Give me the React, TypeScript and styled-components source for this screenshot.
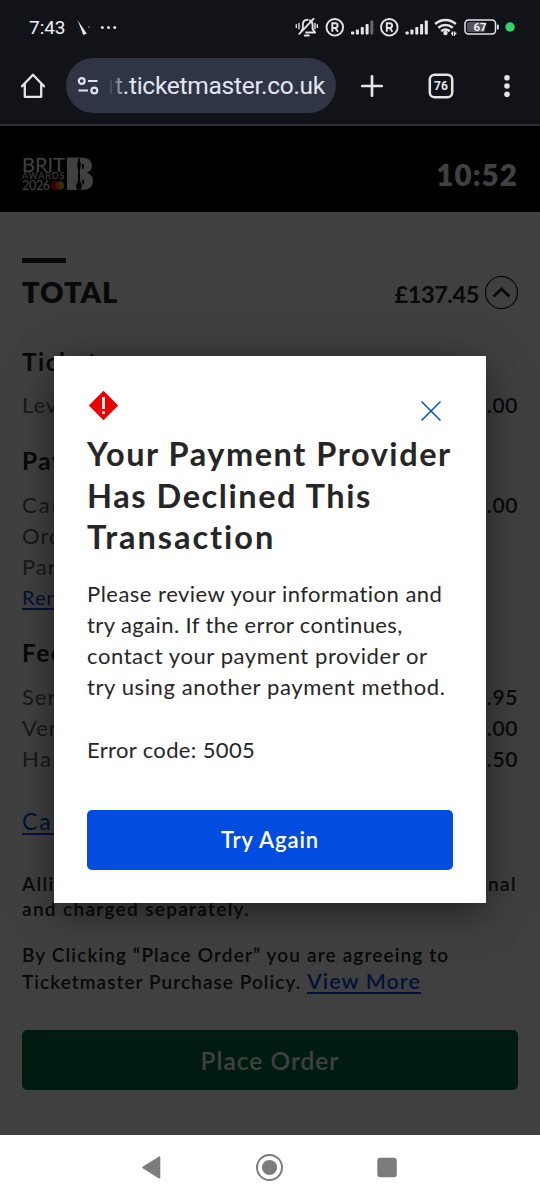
import React from "react";
import styled, { createGlobalStyle } from "styled-components";

const Global = createGlobalStyle`
  * { box-sizing: border-box; }
  body { margin: 0; background: #fff; }
  p, h1, h2 { margin: 0; font-weight: inherit; }
  button { border: 0; padding: 0; background: none; font: inherit; color: inherit; }
`;

const Screen = styled.div`
  width: 540px;
  height: 1200px;
  display: flex;
  flex-direction: column;
  overflow: hidden;
  font-family: Lato, "Liberation Sans", sans-serif;
`;

const BrowserChrome = styled.header`
  height: 126px;
  background: #121318;
  border-bottom: 2px solid #2b2c31;
  color: #e4e5ec;
  font-family: Roboto, sans-serif;
`;

const StatusBar = styled.div`
  height: 54px;
  display: flex;
  align-items: center;
  justify-content: space-between;
  padding: 0 24px 0 29px;
`;

const Clock = styled.span`
  font-size: 19px;
  font-weight: 400;
  letter-spacing: -0.05px;
  line-height: 24px;
  width: 48px;
  color: #f0f0f5;
`;

const StatusLeft = styled.div`
  display: flex;
  align-items: center;
  padding-top: 1px;
`;

const Toolbar = styled.div`
  height: 63px;
  display: flex;
  align-items: center;
  padding-left: 20px;
`;

const AddressPill = styled.div`
  margin-left: 20px;
  width: 270px;
  height: 55px;
  border-radius: 28px;
  background: #2f3545;
  display: flex;
  align-items: center;
  padding-left: 11px;
`;

const Address = styled.span`
  margin-left: 11px;
  font-size: 24.5px;
  line-height: 34px;
  letter-spacing: -0.27px;
  white-space: nowrap;
  color: #e2e5f2;
`;

const UrlEdge = styled.span`
  display: inline-block;
  width: 2px;
  height: 14px;
  margin-right: 3px;
  background: #474c5c;
`;

const FadedLetter = styled.span`
  background: linear-gradient(90deg, #666b7a, #b4b8c6);
  background-clip: text;
  color: transparent;
`;

const ToolIcon = styled.svg<{ $gap: number }>`
  margin-left: ${(p) => p.$gap}px;
  flex: none;
`;

const Page = styled.main`
  position: relative;
  height: 1009px;
  background: #fff;
  color: #262626;
`;

const EventHeader = styled.div`
  height: 86px;
  padding: 12px 22px 0 22px;
  background: #000;
  display: flex;
  justify-content: space-between;
  align-items: center;
`;

const Timer = styled.span`
  color: #fff;
  font-size: 29.5px;
  font-weight: 800;
  line-height: 36px;
  letter-spacing: 1.1px;
`;

const Logo = styled.div`
  display: flex;
  height: 34px;
  margin-top: -3px;
`;

const LogoWords = styled.div`
  width: 45px;
  color: #fff;
  display: flex;
  flex-direction: column;
  white-space: nowrap;
`;

const LogoLine = styled.span<{ $size: number; $height: number; $track: number }>`
  font-size: ${(p) => p.$size}px;
  line-height: ${(p) => p.$height}px;
  height: ${(p) => p.$height}px;
  letter-spacing: ${(p) => p.$track}px;
  display: flex;
  align-items: center;
`;

const Summary = styled.section`
  padding: 46px 22px 0;
`;

const Accent = styled.div`
  width: 44px;
  height: 5px;
  background: #262626;
`;

const TotalRow = styled.div`
  margin-top: 12px;
  height: 34px;
  display: flex;
  align-items: center;
  font-weight: 700;
`;

const TotalLabel = styled.h2`
  flex: 1;
  font-size: 29px;
  font-weight: 800;
  line-height: 32px;
  letter-spacing: 0.9px;
  padding-bottom: 1px;
`;

const TotalValue = styled.span`
  font-size: 23.5px;
  font-weight: 700;
  letter-spacing: -0.4px;
  margin: 3px 6px 0 0;
`;

const SectionTitle = styled.h2<{ $top: number }>`
  margin-top: ${(p) => p.$top}px;
  height: 30px;
  line-height: 30px;
  font-size: 24.5px;
  font-weight: 700;
  letter-spacing: 1.5px;
`;

const Lines = styled.div<{ $top: number }>`
  margin-top: ${(p) => p.$top}px;
`;

const Row = styled.div`
  height: 31px;
  line-height: 29px;
  display: flex;
  justify-content: space-between;
  font-size: 22px;
  letter-spacing: 1px;
  color: #646464;
`;

const Amount = styled.span`
  color: #262626;
  font-weight: 600;
  font-size: 21px;
  letter-spacing: 0.6px;
`;

const TextLink = styled.span<{ $size?: number; $weight?: number }>`
  color: #024ddf;
  text-decoration: underline;
  text-underline-offset: 3px;
  text-decoration-thickness: 1.5px;
  font-size: ${(p) => p.$size ?? 20}px;
  font-weight: ${(p) => p.$weight ?? 400};
`;

const FinePrint = styled.p<{ $top: number; $line: number }>`
  margin-top: ${(p) => p.$top}px;
  font-size: 19px;
  font-weight: 600;
  line-height: ${(p) => p.$line}px;
  white-space: nowrap;
`;

const Track = styled.span<{ $by: number }>`
  display: block;
  letter-spacing: ${(p) => p.$by}px;
`;

const Split = styled.span`
  display: flex;
  justify-content: space-between;
  padding-right: 1px;
  letter-spacing: 1.4px;
`;

const PlaceOrder = styled.button`
  display: block;
  width: 496px;
  height: 60px;
  margin-top: 35px;
  border-radius: 5px;
  background: #006b3d;
  color: #fff;
  font-size: 24.5px;
  font-weight: 600;
  letter-spacing: 1px;
`;

const Scrim = styled.div`
  position: absolute;
  inset: 0;
  background: rgba(0, 0, 0, 0.75);
  display: flex;
  justify-content: center;
  align-items: flex-start;
  padding-top: 230px;
`;

const Dialog = styled.section`
  width: 432px;
  height: 547px;
  padding: 34px 33px 33px;
  background: #fff;
  color: #262626;
  box-shadow: 0 8px 36px rgba(0, 0, 0, 0.5);
`;

const DialogTop = styled.div`
  height: 43px;
  display: flex;
  justify-content: space-between;
  align-items: flex-start;
  padding: 0 12px 0 1px;
`;

const CloseIcon = styled.svg`
  margin-top: 10px;
`;

const DialogTitle = styled.h1`
  font-size: 32.5px;
  font-weight: 700;
  line-height: 41.5px;
  white-space: nowrap;
`;

const DialogText = styled.p<{ $top: number }>`
  margin-top: ${(p) => p.$top}px;
  font-size: 22px;
  line-height: 31px;
  white-space: nowrap;
`;

const TryAgain = styled.button`
  display: block;
  width: 366px;
  height: 60px;
  margin-top: 45px;
  border-radius: 5px;
  background: #024ddf;
  color: #fff;
  font-size: 22px;
  font-weight: 600;
  letter-spacing: 0.9px;
`;

const NavBar = styled.nav`
  height: 65px;
  background: #fff;
`;

const Bars = ({ dim }: { dim?: boolean }) => (
  <g fill="#e4e5ec">
    <rect x="0" y="12.5" width="3.2" height="3" rx=".8" />
    <rect x="4.9" y="10.5" width="3" height="5" rx=".8" />
    <rect x="9.8" y="8" width="3" height="7.500" rx=".8" />
    <rect x="14.600" y="5" width="3" height="10.500" rx=".8" />
    <rect x="19.300" y="1.500" width="3" height="14" rx=".8" opacity={dim ? 0.4 : 1} />
  </g>
);

const Registered = () => (
  <g fill="none" stroke="#e4e5ec" strokeWidth="1.9">
    <circle cx="9.3" cy="9.3" r="8.3" />
    <path d="M6.800 13.800V5.200h2.900a2.400 2.400 0 0 1 0 4.800H6.800M9.700 10l2.800 3.800" strokeWidth="1.9" />
  </g>
);

const StatusIcons = () => (
  <svg width="221" height="28" viewBox="295 13 221 28" fill="none">
    <g stroke="#e4e5ec" strokeWidth="1.9" strokeLinecap="round" strokeLinejoin="round">
      <path d="M301.300 31l1.500-1.900v-4c0-3.600 2-5.400 4.800-5.400M309.800 20.400c2 .8 2.800 2.400 2.800 4.700v4l2.500 3.400h-9M299.300 33.800l14.200-15" />
      <path d="M304.800 35.600h4" strokeWidth="2" />
      <path d="M296.300 24.800v2.600M299 23.500v5.200M317.300 24.800v2.600M315 23.500v5.200" strokeWidth="1.400" />
    </g>
    <g transform="translate(325.500 18)"><Registered /></g>
    <g transform="translate(351 19)"><Bars dim /></g>
    <g transform="translate(380 18)"><Registered /></g>
    <g transform="translate(405.500 19)"><Bars /></g>
    <g stroke="#e4e5ec" strokeWidth="2.600">
      <path d="M435.200 24c6.200-5.300 14.400-5.300 20.600 0" />
      <path d="M438.300 27.800c4.300-3.700 10.100-3.700 14.400 0" />
      <path d="M441.300 31.300c2.500-2.200 5.900-2.200 8.400 0" />
    </g>
    <circle cx="445.500" cy="33" r="2.200" fill="#e4e5ec" />
    <path d="M451 33.500h1.800M452.600 31.500v4.200M454.600 31.500v4.200M454.600 33.500h1.800" stroke="#e4e5ec" strokeWidth="1.300" />
    <rect x="465" y="20" width="30.500" height="14" rx="3.500" stroke="#e4e5ec" strokeWidth="1.500" />
    <rect x="467" y="22" width="18" height="10" rx="1.500" fill="#54555b" />
    <rect x="497" y="24.500" width="1.800" height="5" rx=".8" fill="#e4e5ec" />
    <text x="480" y="31.300" textAnchor="middle" fontFamily="Roboto" fontSize="11.500" fontWeight="700" fill="#f2f2f6">67</text>
    <circle cx="510" cy="27" r="4.700" fill="#34d267" />
  </svg>
);

const BritMark = () => (
  <svg width="27" height="34" viewBox="0 0 27 34">
    <path fill="#fff" d="M0 .5h14C21 .5 25 3.500 25 8.700c0 3.800-2.300 6-5.300 7 4 1 6.300 4 6.300 8.300 0 6.200-4.500 9-11.500 9H0z" />
    <path fill="#000" d="M11.200 2c.4-1.200 1.200-1.200 1.600 0v2.600l1 1.400-.3 4-.7 3.500.3 10 .7 2.500c1.300 1.300 1.500 4.400.2 6.800h-4c-1.300-2.400-1.100-5.500.2-6.800l.7-2.500.3-10-.7-3.500-.3-4 1-1.400zM14.800 6.800c1.300-.5 2.300.6 2.200 2.600-.1 1.500-.9 2.700-2 2.900zM15.200 22.500c1.200-.4 2 .6 2 2.300s-.6 2.600-1.800 2.600z" />
  </svg>
);

export default function App() {
  return (
    <Screen>
      <Global />
      <BrowserChrome>
        <StatusBar>
          <StatusLeft>
            <Clock>7:43</Clock>
            <svg width="42" height="18" viewBox="77 18 42 18">
              <path d="M77.500 19l5.800 15 3.500-1.400z" fill="#e4e5ec" />
              <circle cx="89" cy="26" r=".8" fill="#a0a1a8" />
              <circle cx="102.300" cy="26.500" r="1.500" fill="#e4e5ec" />
              <circle cx="108.500" cy="26.500" r="1.500" fill="#e4e5ec" />
              <circle cx="114.700" cy="26.500" r="1.500" fill="#e4e5ec" />
            </svg>
          </StatusLeft>
          <StatusIcons />
        </StatusBar>
        <Toolbar>
          <svg width="26" height="26" viewBox="0 0 26 26" fill="none" stroke="#e4e5ec" strokeWidth="2.300" strokeLinejoin="round" strokeLinecap="round">
            <path d="M2 13.300L13 1.800l11 11.500M4.800 11v12.800h16.400V11" />
          </svg>
          <AddressPill>
            <svg width="22" height="18" viewBox="0 0 22 18" fill="none" stroke="#dfe2ef" strokeWidth="2.200">
              <circle cx="4.700" cy="4" r="2.900" />
              <path d="M11 4h9.500M1.500 13.500h9.500" />
              <circle cx="17.300" cy="13.500" r="2.900" />
            </svg>
            <Address><UrlEdge /><FadedLetter>t</FadedLetter>.ticketmaster.co.uk</Address>
          </AddressPill>
          <ToolIcon $gap={25} width="22" height="22" viewBox="0 0 22 22" fill="none" stroke="#e4e5ec" strokeWidth="2.700" strokeLinecap="round">
            <path d="M11 1.300v19.400M1.300 11h19.400" />
          </ToolIcon>
          <ToolIcon $gap={45} width="26" height="26" viewBox="0 0 26 26">
            <rect x="1.800" y="1.800" width="22.400" height="22.400" rx="4.800" fill="none" stroke="#e4e5ec" strokeWidth="2.500" />
            <text x="13" y="17.300" textAnchor="middle" fontFamily="Roboto" fontSize="12" fontWeight="700" fill="#e4e5ec">76</text>
          </ToolIcon>
          <ToolIcon $gap={50} width="6" height="24" viewBox="0 0 6 24" fill="#e4e5ec">
            <circle cx="3" cy="3.800" r="2.800" />
            <circle cx="3" cy="12" r="2.800" />
            <circle cx="3" cy="20.200" r="2.800" />
          </ToolIcon>
        </Toolbar>
      </BrowserChrome>

      <Page>
        <EventHeader>
          <Logo>
            <LogoWords>
              <LogoLine $size={20} $height={14} $track={0}>BRIT</LogoLine>
              <LogoLine $size={9} $height={10} $track={0.85}>AWARDS</LogoLine>
              <LogoLine $size={12.5} $height={10} $track={-0.3}>
                2026
                <svg width="15" height="9" viewBox="0 0 15 9">
                  <circle cx="5" cy="4.500" r="4.300" fill="#eb001b" />
                  <circle cx="10" cy="4.500" r="4.300" fill="#f79e1b" />
                  <path d="M7.500 1a4.300 4.300 0 0 1 0 7 4.300 4.300 0 0 1 0-7" fill="#ff5f00" />
                </svg>
              </LogoLine>
            </LogoWords>
            <BritMark />
          </Logo>
          <Timer>10:52</Timer>
        </EventHeader>

        <Summary>
          <Accent />
          <TotalRow>
            <TotalLabel>TOTAL</TotalLabel>
            <TotalValue>£137.45</TotalValue>
            <svg width="33" height="33" viewBox="0 0 33 33" fill="none" stroke="#262626">
              <circle cx="16.500" cy="16.500" r="16" strokeWidth="1.200" />
              <path d="M8.500 20.500l8-7.500 8 7.500" strokeWidth="3" />
            </svg>
          </TotalRow>

          <SectionTitle $top={38}>Tickets</SectionTitle>
          <Lines $top={13}>
            <Row><span>Level</span><Amount>£99.00</Amount></Row>
          </Lines>

          <SectionTitle $top={25}>Pay</SectionTitle>
          <Lines $top={14}>
            <Row><Track $by={2}>Car</Track><Amount>£20.00</Amount></Row>
            <Row>Order</Row>
            <Row>Pars</Row>
            <Row><TextLink>Rem</TextLink></Row>
          </Lines>

          <SectionTitle $top={24}>Fees</SectionTitle>
          <Lines $top={14}>
            <Row><span>Serv</span><Amount>£12.95</Amount></Row>
            <Row><span>Venue</span><Amount>£3.00</Amount></Row>
            <Row><Track $by={1.6}>Hand</Track><Amount>£2.50</Amount></Row>
          </Lines>
          <Lines $top={32}>
            <Row><Track $by={1.8}><TextLink $size={23}>Cancel</TextLink></Track></Row>
          </Lines>

          <FinePrint $top={34} $line={24.5}>
            <Split><span>Allianz</span><span>optional</span></Split>
            <Track $by={1.33}>and charged separately.</Track>
          </FinePrint>
          <FinePrint $top={20} $line={27}>
            <Track $by={1.14}>By Clicking “Place Order” you are agreeing to</Track>
            <Track $by={1.05}>
              Ticketmaster Purchase Policy. <TextLink $size={21.5} $weight={600}>View More</TextLink>
            </Track>
          </FinePrint>
          <PlaceOrder>Place Order</PlaceOrder>
        </Summary>

        <Scrim>
          <Dialog role="dialog">
            <DialogTop>
              <svg width="31" height="31" viewBox="0 0 31 31">
                <path d="M15.500 .8L30.200 15.500 15.500 30.200 .8 15.500z" fill="#eb0000" />
                <path d="M15.500 7v12M15.500 21.200v2.800" stroke="#fff" strokeWidth="2.700" />
              </svg>
              <CloseIcon width="20" height="21" viewBox="0 0 20 21" stroke="#024ddf" strokeWidth="1.500">
                <path d="M.5 1.500l19 19M19.500 1.500L.5 20.500" />
              </CloseIcon>
            </DialogTop>
            <DialogTitle>
              <Track $by={1.55}>Your Payment Provider</Track>
              <Track $by={1.57}>Has Declined This</Track>
              <Track $by={1.95}>Transaction</Track>
            </DialogTitle>
            <DialogText $top={20}>
              <Track $by={0.49}>Please review your information and</Track>
              <Track $by={0.41}>try again. If the error continues,</Track>
              <Track $by={0.58}>contact your payment provider or</Track>
              <Track $by={0.6}>try using another payment method.</Track>
            </DialogText>
            <DialogText $top={32}>
              <Track $by={0.35}>Error code: 5005</Track>
            </DialogText>
            <TryAgain>Try Again</TryAgain>
          </Dialog>
        </Scrim>
      </Page>

      <NavBar>
        <svg width="540" height="65" viewBox="0 1135 540 65" fill="#7c7c7c">
          <path d="M143 1166.600l16-10.100c.8-.4 1.300 0 1.300.8v20.400c0 .8-.5 1.200-1.300.8l-16-10.100c-.9-.6-.9-1.200 0-1.800z" />
          <circle cx="269.500" cy="1167.500" r="12.500" fill="none" stroke="#7c7c7c" strokeWidth="2" />
          <circle cx="269.500" cy="1167.500" r="7.600" />
          <rect x="377.300" y="1157.700" width="19.500" height="19.500" rx="3" />
        </svg>
      </NavBar>
    </Screen>
  );
}
